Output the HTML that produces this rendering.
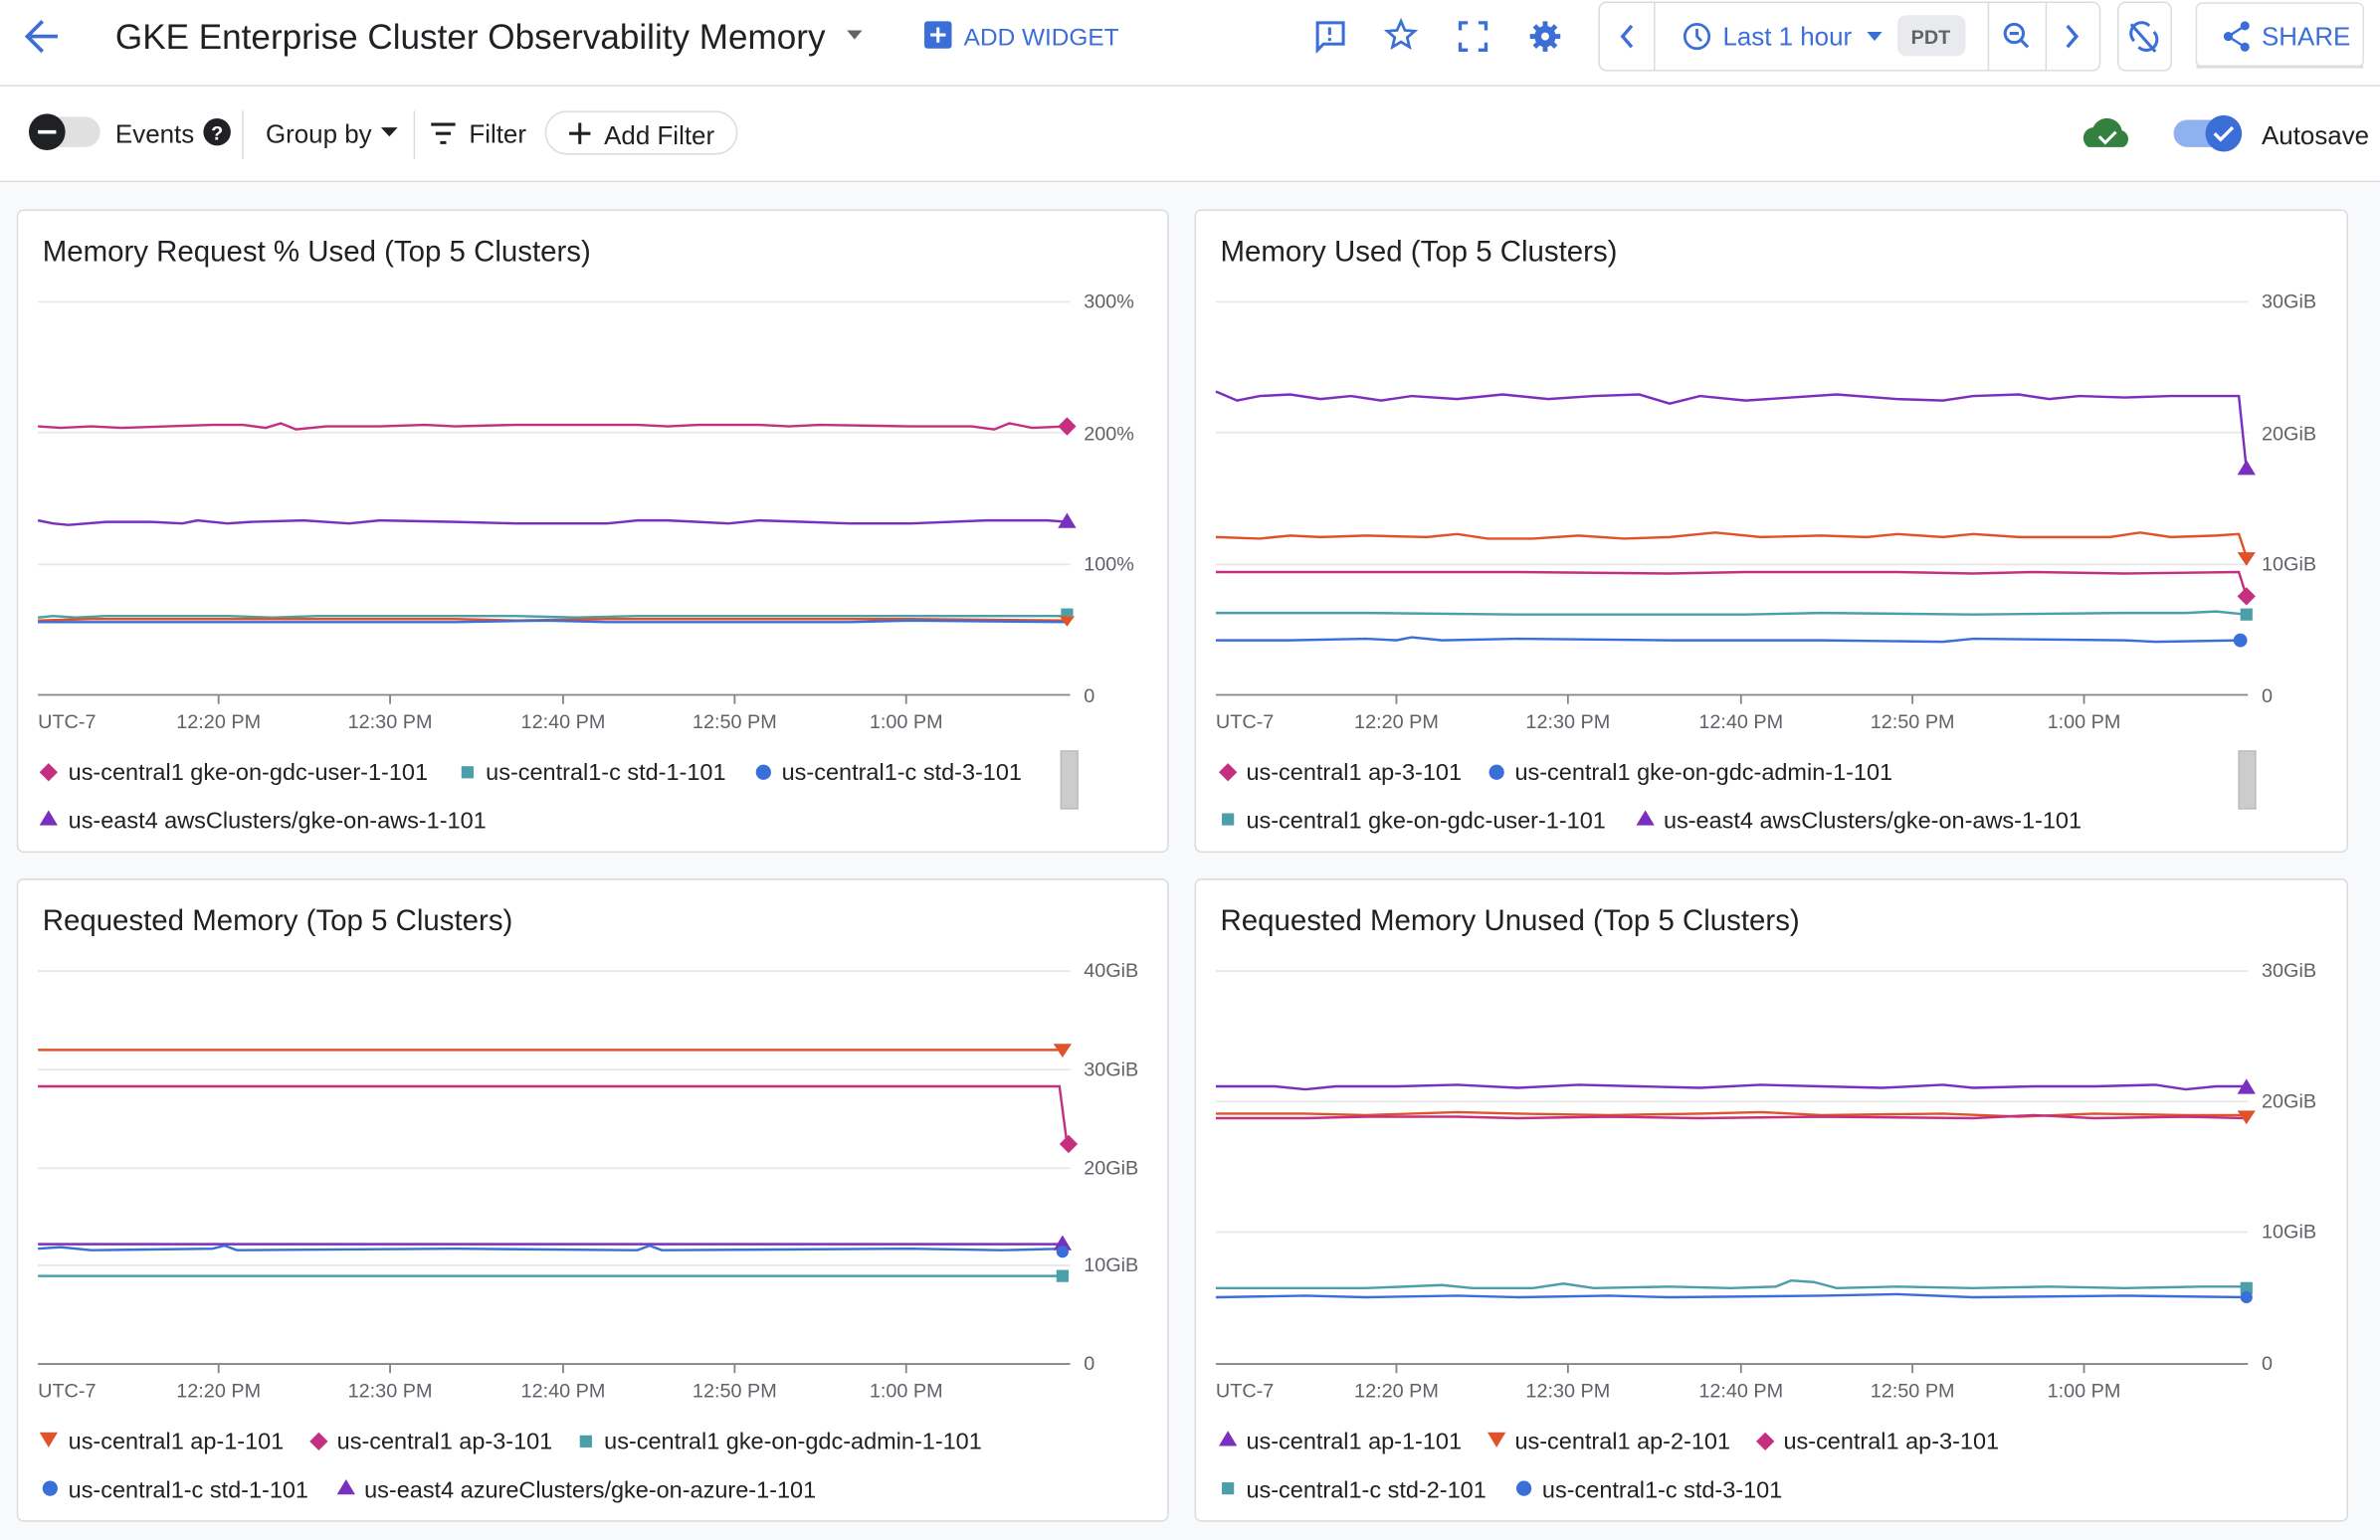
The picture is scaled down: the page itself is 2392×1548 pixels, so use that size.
<!DOCTYPE html>
<html><head><meta charset="utf-8"><style>
html,body{margin:0;padding:0;background:#f8f9fa;overflow:hidden;}
#w{width:1568px;height:1015px;transform:scale(1.52551,1.52512);transform-origin:0 0;position:relative;font-family:"Liberation Sans",Arial,sans-serif;color:#202124;background:#f8f9fa;}
.abs{position:absolute;}
</style></head><body><div id="w">
<div class="abs" style="left:0;top:0;width:1568px;height:56px;background:#fff;border-bottom:1px solid #dadce0;"></div>
<div class="abs" style="left:0;top:57px;width:1568px;height:62px;background:#fff;border-bottom:1px solid #dadce0;"></div>
<svg class="abs" style="left:0;top:0" width="1568" height="1015" viewBox="0 0 1568 1015" font-family="Liberation Sans, Arial, sans-serif">
<!-- header -->
<path d="M38 24H20M28 14l-10 10 10 10" stroke="#3c6ed8" stroke-width="2.4" fill="none"/>
<text x="76" y="32" font-size="23" fill="#202124">GKE Enterprise Cluster Observability Memory</text>
<path d="M558 20h10l-5 6z" fill="#5f6368"/>
<rect x="609" y="14" width="18" height="18" rx="2" fill="#3c6ed8"/><path d="M618 18v10M613 23h10" stroke="#fff" stroke-width="2"/>
<text x="635" y="30" font-size="16" fill="#3c6ed8" font-weight="500">ADD WIDGET</text>
<path d="M868 15h17v14h-13l-4 4z" fill="none" stroke="#3c6ed8" stroke-width="2"/><path d="M876 18v5M876 25v2" stroke="#3c6ed8" stroke-width="2"/>
<path d="M923 14l2.6 6 6.4.5-4.9 4.2 1.5 6.3-5.6-3.4-5.6 3.4 1.5-6.3-4.9-4.2 6.4-.5z" fill="none" stroke="#3c6ed8" stroke-width="1.8"/>
<path d="M962 20v-5h5M974 15h5v5M979 28v5h-5M967 33h-5v-5" fill="none" stroke="#3c6ed8" stroke-width="2.2"/>
<path d="M1018 14v20M1008 24h20M1011 17l14 14M1025 17l-14 14" stroke="#3c6ed8" stroke-width="3.2"/><circle cx="1018" cy="24" r="7" fill="#3c6ed8"/><circle cx="1018" cy="24" r="2.6" fill="#fff"/>
<rect x="1053.5" y="1.5" width="330" height="45" rx="5" fill="#fff" stroke="#dadce0"/>
<path d="M1090 2v44M1310 2v44M1348 2v44" stroke="#dadce0"/>
<path d="M1075 17l-6 7 6 7" fill="none" stroke="#3c6ed8" stroke-width="2.2"/>
<circle cx="1118" cy="24" r="8" fill="none" stroke="#3c6ed8" stroke-width="1.8"/><path d="M1118 19v5l3 3" fill="none" stroke="#3c6ed8" stroke-width="1.8"/>
<text x="1135" y="30" font-size="17" fill="#3c6ed8">Last 1 hour</text>
<path d="M1230 21h10l-5 6z" fill="#3c6ed8"/>
<rect x="1250" y="10" width="45" height="27" rx="6" fill="#e8eaed"/><text x="1272" y="29" font-size="13" fill="#5f6368" text-anchor="middle" font-weight="bold">PDT</text>
<circle cx="1327" cy="22" r="6" fill="none" stroke="#3c6ed8" stroke-width="2"/><path d="M1331 26l5 5M1324 22h6" stroke="#3c6ed8" stroke-width="2"/>
<path d="M1362 17l6 7-6 7" fill="none" stroke="#3c6ed8" stroke-width="2.2"/>
<rect x="1395.5" y="1.5" width="35" height="45" rx="5" fill="#fff" stroke="#dadce0"/>
<path d="M1404 16l16 18M1406 27a7 7 0 0 1 10-10M1419 21a7 7 0 0 1-10 10" fill="none" stroke="#3c6ed8" stroke-width="2"/>
<rect x="1447" y="2" width="110" height="42" rx="4" fill="#fff" stroke="#e0e0e0"/>
<rect x="1447" y="43" width="110" height="2" fill="#ddd"/>
<circle cx="1479" cy="17" r="3" fill="#3c6ed8"/><circle cx="1468" cy="24" r="3" fill="#3c6ed8"/><circle cx="1479" cy="31" r="3" fill="#3c6ed8"/><path d="M1479 17l-11 7 11 7" fill="none" stroke="#3c6ed8" stroke-width="1.6"/>
<text x="1490" y="30" font-size="17" fill="#3c6ed8">SHARE</text>
<!-- toolbar -->
<rect x="20" y="77" width="46" height="20" rx="10" fill="#e0e0e0"/><circle cx="31" cy="87" r="12" fill="#202124"/><path d="M25 87h12" stroke="#fff" stroke-width="2.4"/>
<text x="76" y="94" font-size="17" fill="#202124">Events</text>
<circle cx="143" cy="87" r="9" fill="#202124"/><text x="143" y="92" font-size="13" fill="#fff" text-anchor="middle" font-weight="bold">?</text>
<path d="M160 73v32M273 73v32" stroke="#dadce0"/>
<text x="175" y="94" font-size="17" fill="#202124">Group by</text><path d="M251 84h11l-5.5 6z" fill="#202124"/>
<path d="M284 82h16M287 88h10M290 94h4" stroke="#202124" stroke-width="2"/>
<text x="309" y="94" font-size="17" fill="#202124">Filter</text>
<rect x="359.5" y="73.5" width="126" height="28" rx="14" fill="#fff" stroke="#dadce0"/>
<path d="M382 81v14M375 88h14" stroke="#202124" stroke-width="2"/><text x="398" y="95" font-size="17" fill="#202124">Add Filter</text>
<path d="M1376 97a7 7 0 0 1 3-13a10 10 0 0 1 19 2a6 6 0 0 1 1 11z" fill="#34803f"/><path d="M1383 90l4 4 7-7" fill="none" stroke="#fff" stroke-width="2"/>
<rect x="1432" y="79" width="44" height="18" rx="9" fill="#8fb1ef"/><circle cx="1465" cy="88" r="12" fill="#3c6ed8"/><path d="M1459 88l4 4 8-8" fill="none" stroke="#fff" stroke-width="2.2"/>
<text x="1490" y="95" font-size="17" fill="#202124">Autosave</text>

<!-- panels -->
<g fill="#fff" stroke="#dadce0">
<rect x="11.5" y="138.5" width="758" height="423" rx="4"/><rect x="787.5" y="138.5" width="759" height="423" rx="4"/>
<rect x="11.5" y="579.5" width="758" height="423" rx="4"/><rect x="787.5" y="579.5" width="759" height="423" rx="4"/>
</g>
<g font-size="19.3" fill="#202124">
<text x="28" y="172">Memory Request % Used (Top 5 Clusters)</text>
<text x="804" y="172">Memory Used (Top 5 Clusters)</text>
<text x="28" y="613">Requested Memory (Top 5 Clusters)</text>
<text x="804" y="613">Requested Memory Unused (Top 5 Clusters)</text>
</g>
<!-- grids -->
<g stroke="#e8e8e8" stroke-width="1.2">
<path d="M25 199H705M25 285H705M25 372H705M801 199H1481M801 285H1481M801 372H1481M25 640H705M25 705H705M25 770H705M25 834H705M801 640H1481M801 726H1481M801 812H1481"/>
</g>
<g stroke="#80868b" stroke-width="1.2">
<path d="M25 458H705M801 458H1481M25 899H705M801 899H1481"/>
<path d="M144 458v6M257 458v6M371 458v6M484 458v6M597 458v6M920 458v6M1033 458v6M1147 458v6M1260 458v6M1373 458v6M144 899v6M257 899v6M371 899v6M484 899v6M597 899v6M920 899v6M1033 899v6M1147 899v6M1260 899v6M1373 899v6"/>
</g>
<g font-size="13" fill="#5f6368">
<text x="714" y="203">300%</text><text x="714" y="290">200%</text><text x="714" y="376">100%</text><text x="714" y="463">0</text>
<text x="1490" y="203">30GiB</text><text x="1490" y="290">20GiB</text><text x="1490" y="376">10GiB</text><text x="1490" y="463">0</text>
<text x="714" y="644">40GiB</text><text x="714" y="709">30GiB</text><text x="714" y="774">20GiB</text><text x="714" y="838">10GiB</text><text x="714" y="903">0</text>
<text x="1490" y="644">30GiB</text><text x="1490" y="730">20GiB</text><text x="1490" y="816">10GiB</text><text x="1490" y="903">0</text>
<g text-anchor="middle">
<text x="144" y="480">12:20 PM</text><text x="257" y="480">12:30 PM</text><text x="371" y="480">12:40 PM</text><text x="484" y="480">12:50 PM</text><text x="597" y="480">1:00 PM</text>
<text x="920" y="480">12:20 PM</text><text x="1033" y="480">12:30 PM</text><text x="1147" y="480">12:40 PM</text><text x="1260" y="480">12:50 PM</text><text x="1373" y="480">1:00 PM</text>
<text x="144" y="921">12:20 PM</text><text x="257" y="921">12:30 PM</text><text x="371" y="921">12:40 PM</text><text x="484" y="921">12:50 PM</text><text x="597" y="921">1:00 PM</text>
<text x="920" y="921">12:20 PM</text><text x="1033" y="921">12:30 PM</text><text x="1147" y="921">12:40 PM</text><text x="1260" y="921">12:50 PM</text><text x="1373" y="921">1:00 PM</text>
</g>
<text x="25" y="480">UTC-7</text><text x="801" y="480">UTC-7</text><text x="25" y="921">UTC-7</text><text x="801" y="921">UTC-7</text>
</g>
<!-- data panel 1 -->
<g fill="none" stroke-width="1.6">
<polyline stroke="#c4307f" points="25,281 40,282 60,281 80,282 110,281 140,280 160,280 175,282 185,279 195,283 215,281 250,281 280,280 300,281 340,280 380,280 420,280 440,281 460,280 500,280 520,281 540,280 600,281 640,281 655,283 665,279 680,282 703,281"/>
<polyline stroke="#7b2fbe" points="25,343 35,345 45,346 70,344 100,344 120,345 130,343 150,345 165,344 200,343 230,345 250,343 300,344 340,345 370,345 400,345 420,343 440,343 460,344 480,345 500,343 530,344 560,345 600,345 650,343 690,343 703,344"/>
<polyline stroke="#4b9fa8" points="25,407 35,406 50,407 70,406 150,406 180,407 210,406 250,406 300,406 340,406 380,407 420,406 460,406 500,406 540,406 600,406 660,406 703,406"/>
<polyline stroke="#e0532a" points="25,409 60,408 150,408 250,408 300,408 340,409 400,408 500,408 600,408 703,409"/>
<polyline stroke="#3a6fd8" points="25,410 60,410 200,410 300,410 360,409 400,410 500,410 560,410 600,409 703,410"/>
</g>
<path d="M703 275l6 6-6 6-6-6z" fill="#c4307f"/><path d="M703 338l6 10h-12z" fill="#7b2fbe"/>
<rect x="699" y="401" width="8" height="5" fill="#4b9fa8"/><path d="M698 406h10l-5 7z" fill="#e0532a"/>
<!-- panel 2 -->
<g fill="none" stroke-width="1.6">
<polyline stroke="#7b2fbe" points="801,258 815,264 830,261 850,260 870,263 890,261 910,264 930,261 960,263 990,260 1020,263 1050,261 1080,260 1100,266 1120,261 1150,264 1180,262 1210,260 1250,263 1280,264 1300,261 1330,260 1350,263 1370,261 1400,262 1430,261 1460,261 1475,261 1480,309"/>
<polyline stroke="#e0532a" points="801,354 830,355 850,353 870,354 900,353 940,354 960,352 980,355 1010,355 1040,353 1070,355 1100,354 1130,351 1160,354 1200,353 1230,354 1250,352 1280,354 1300,352 1330,354 1360,354 1390,354 1410,351 1430,354 1460,353 1475,352 1480,367"/>
<polyline stroke="#c4307f" points="801,377 900,377 1000,377 1100,378 1150,377 1250,377 1300,378 1340,377 1400,378 1475,377 1480,393"/>
<polyline stroke="#4b9fa8" points="801,404 900,404 1000,405 1150,405 1200,404 1300,405 1400,404 1440,404 1460,403 1480,405"/>
<polyline stroke="#3a6fd8" points="801,422 850,422 900,421 920,422 930,420 950,422 1000,421 1100,422 1200,422 1280,423 1300,421 1400,422 1420,423 1476,422"/>
</g>
<path d="M1480 303l6 10h-12z" fill="#7b2fbe"/><path d="M1474 364h12l-6 9z" fill="#e0532a"/><path d="M1480 387l6 6-6 6-6-6z" fill="#c4307f"/>
<rect x="1476" y="401" width="8" height="8" fill="#4b9fa8"/><circle cx="1476" cy="422" r="4.5" fill="#3a6fd8"/>
<!-- panel 3 -->
<g fill="none" stroke-width="1.6">
<polyline stroke="#e0532a" points="25,692 700,692"/>
<polyline stroke="#c4307f" points="25,716 698,716 703,754"/>
<polyline stroke="#7b2fbe" points="25,820 700,820"/>
<polyline stroke="#3a6fd8" points="25,823 40,822 60,824 140,823 148,821 156,824 300,823 420,824 428,821 436,824 600,823 660,824 700,823"/>
<polyline stroke="#4b9fa8" points="25,841 700,841"/>
</g>
<path d="M694 688h12l-6 9z" fill="#e0532a"/><path d="M704 748l6 6-6 6-6-6z" fill="#c4307f"/><path d="M700 814l6 10h-12z" fill="#7b2fbe"/><circle cx="700" cy="825" r="4" fill="#3a6fd8"/><rect x="696" y="837" width="8" height="8" fill="#4b9fa8"/>
<!-- panel 4 -->
<g fill="none" stroke-width="1.6">
<polyline stroke="#7b2fbe" points="801,716 840,716 860,718 880,716 920,716 960,715 1000,717 1040,715 1080,716 1120,717 1160,715 1200,716 1240,717 1280,715 1300,717 1340,716 1380,716 1420,715 1440,718 1460,716 1480,716"/>
<polyline stroke="#e0532a" points="801,734 860,734 900,735 960,733 1000,734 1060,735 1120,734 1160,733 1200,735 1280,734 1330,736 1380,734 1440,735 1480,735"/>
<polyline stroke="#c4307f" points="801,737 860,737 900,736 960,736 1000,737 1060,736 1120,737 1200,736 1300,737 1340,735 1380,737 1440,736 1480,737"/>
<polyline stroke="#4b9fa8" points="801,849 900,849 950,847 970,849 1010,849 1030,846 1050,849 1100,848 1140,849 1170,848 1180,844 1195,845 1210,849 1250,848 1300,849 1350,848 1400,849 1450,848 1480,848"/>
<polyline stroke="#3a6fd8" points="801,855 860,854 900,855 960,854 1000,855 1060,854 1100,855 1200,854 1250,853 1300,855 1400,854 1480,855"/>
</g>
<path d="M1480 711l6 10h-12z" fill="#7b2fbe"/><path d="M1474 732h12l-6 9z" fill="#e0532a"/><rect x="1476" y="845" width="8" height="8" fill="#4b9fa8"/><circle cx="1480" cy="855" r="4" fill="#3a6fd8"/>
<!-- scrollbars -->
<rect x="699" y="495" width="11" height="38" fill="#ccc" stroke="#bbb"/><rect x="1475" y="495" width="11" height="38" fill="#ccc" stroke="#bbb"/>
<!-- legends -->
<g font-size="15.4" fill="#202124">
<path d="M32 503l6 6-6 6-6-6z" fill="#c4307f"/><text x="45" y="514">us-central1 gke-on-gdc-user-1-101</text>
<rect x="304" y="505" width="8" height="8" fill="#4b9fa8"/><text x="320" y="514">us-central1-c std-1-101</text>
<circle cx="503" cy="509" r="5" fill="#3a6fd8"/><text x="515" y="514">us-central1-c std-3-101</text>
<path d="M32 534l6 10h-12z" fill="#7b2fbe"/><text x="45" y="546">us-east4 awsClusters/gke-on-aws-1-101</text>

<path d="M809 503l6 6-6 6-6-6z" fill="#c4307f"/><text x="821" y="514">us-central1 ap-3-101</text>
<circle cx="986" cy="509" r="5" fill="#3a6fd8"/><text x="998" y="514">us-central1 gke-on-gdc-admin-1-101</text>
<rect x="805" y="536" width="8" height="8" fill="#4b9fa8"/><text x="821" y="546">us-central1 gke-on-gdc-user-1-101</text>
<path d="M1084 534l6 10h-12z" fill="#7b2fbe"/><text x="1096" y="546">us-east4 awsClusters/gke-on-aws-1-101</text>

<path d="M26 944h12l-6 10z" fill="#e0532a"/><text x="45" y="955">us-central1 ap-1-101</text>
<path d="M210 944l6 6-6 6-6-6z" fill="#c4307f"/><text x="222" y="955">us-central1 ap-3-101</text>
<rect x="382" y="946" width="8" height="8" fill="#4b9fa8"/><text x="398" y="955">us-central1 gke-on-gdc-admin-1-101</text>
<circle cx="33" cy="981" r="5" fill="#3a6fd8"/><text x="45" y="987">us-central1-c std-1-101</text>
<path d="M228 975l6 10h-12z" fill="#7b2fbe"/><text x="240" y="987">us-east4 azureClusters/gke-on-azure-1-101</text>

<path d="M809 943l6 10h-12z" fill="#7b2fbe"/><text x="821" y="955">us-central1 ap-1-101</text>
<path d="M980 944h12l-6 10z" fill="#e0532a"/><text x="998" y="955">us-central1 ap-2-101</text>
<path d="M1163 944l6 6-6 6-6-6z" fill="#c4307f"/><text x="1175" y="955">us-central1 ap-3-101</text>
<rect x="805" y="977" width="8" height="8" fill="#4b9fa8"/><text x="821" y="987">us-central1-c std-2-101</text>
<circle cx="1004" cy="981" r="5" fill="#3a6fd8"/><text x="1016" y="987">us-central1-c std-3-101</text>
</g>
</svg>
</div></body></html>
